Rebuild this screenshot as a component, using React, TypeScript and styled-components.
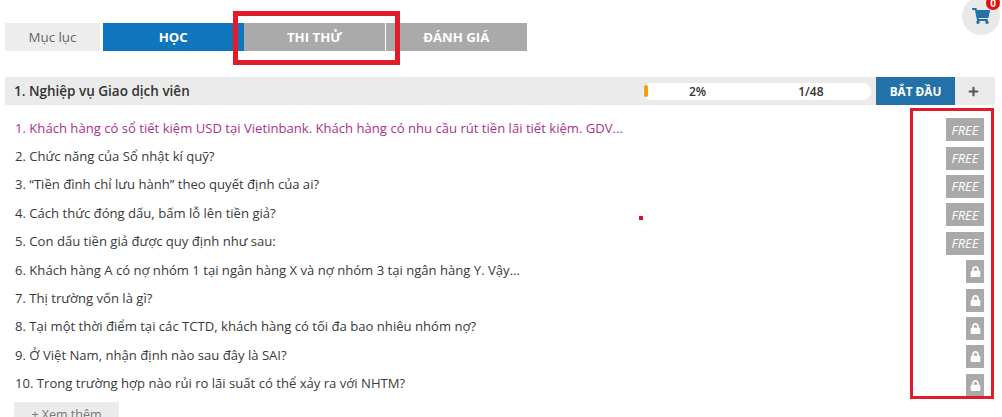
import React from "react";
import styled, { createGlobalStyle } from "styled-components";
import { FaShoppingCart, FaPlus, FaLock } from "react-icons/fa";

const Global = createGlobalStyle`
  html, body { margin: 0; padding: 0; background: #fff; overflow: hidden; }
  body { font-family: "Open Sans", "Noto Sans", sans-serif; }
`;

const Page = styled.div`
  position: relative;
  width: 1002px;
  height: 417px;
  overflow: hidden;
  padding: 23px 7px 0 5px;
  box-sizing: border-box;
`;

const Tabs = styled.div`
  display: flex;
  height: 28px;
`;

const MenuTab = styled.div`
  width: 95px;
  margin-right: 3px;
  background: #ededed;
  color: #666;
  font-size: 13.3px;
  display: flex;
  align-items: center;
  justify-content: center;
`;

const Tab = styled.div<{ $active?: boolean }>`
  width: 141.3px;
  background: ${(p) => (p.$active ? "#0f75bc" : "#aaaaaa")};
  color: #fff;
  font-size: 13.2px;
  font-weight: 700;
  display: flex;
  align-items: center;
  justify-content: center;
  border-right: 1px solid ${(p) => (p.$active ? "#0f75bc" : "#fff")};
  box-sizing: border-box;
  &:last-child { border-right: 0; }
`;

const Section = styled.div`
  margin-top: 26px;
  height: 28px;
  background: #ebebeb;
  display: flex;
  align-items: center;
`;

const SectionTitle = styled.div`
  flex: 1;
  padding-left: 9px;
  font-size: 13.5px;
  font-weight: 600;
  color: #333;
`;

const Progress = styled.div`
  width: 228px;
  height: 17px;
  margin-right: 5px;
  background: #fff;
  border-radius: 9px;
  display: flex;
  align-items: center;
  font-size: 12px;
  font-weight: 600;
  color: #333;
`;

const ProgressFill = styled.div`
  width: 4px;
  height: 12px;
  margin-left: 1px;
  border-radius: 2px;
  background: #f59c0c;
`;

const Percent = styled.span`
  margin-left: 41px;
`;

const Count = styled.span`
  margin-left: 92px;
`;

const StartButton = styled.div`
  width: 79px;
  height: 100%;
  background: #2271a8;
  color: #fff;
  font-size: 11.8px;
  font-weight: 700;
  display: flex;
  align-items: center;
  justify-content: center;
`;

const Expand = styled.div`
  width: 36px;
  margin-right: 4px;
  display: flex;
  justify-content: center;
  color: #555;
  font-size: 11px;
`;

const List = styled.div`
  margin-top: 8.5px;
`;

const Row = styled.div<{ $current?: boolean }>`
  height: 28.4px;
  display: flex;
  align-items: center;
  justify-content: space-between;
  padding: 0 11px 0 10px;
  font-size: 13.1px;
  color: ${(p) => (p.$current ? "#ad2f8e" : "#3a3a3a")};
`;

const Free = styled.div`
  width: 38px;
  height: 23px;
  margin-top: 4px;
  background: #a9a9a9;
  color: #fff;
  font-size: 13px;
  font-style: italic;
  display: flex;
  align-items: center;
  justify-content: center;
`;

const Lock = styled.div`
  width: 18px;
  height: 23px;
  margin-top: 4px;
  background: #a9a9a9;
  color: #fff;
  font-size: 11px;
  display: flex;
  align-items: center;
  justify-content: center;
`;

const More = styled.div`
  margin: 5px 0 0 9px;
  width: 105px;
  height: 28px;
  background: #ebebeb;
  color: #777;
  font-size: 12.5px;
  display: flex;
  justify-content: center;
  padding-top: 4px;
  box-sizing: border-box;
`;

const Cart = styled.div`
  position: absolute;
  left: 962px;
  top: -3px;
  width: 38px;
  height: 38px;
  border-radius: 50%;
  background: #e9e9e9;
  color: #2471a8;
  font-size: 18px;
  display: flex;
  align-items: center;
  justify-content: center;
`;

const Badge = styled.div`
  position: absolute;
  left: 986px;
  top: -4px;
  width: 14px;
  height: 14px;
  border-radius: 50%;
  background: #ee0a0a;
  color: #fff;
  font-size: 10px;
  font-weight: 700;
  text-align: center;
  line-height: 14px;
`;

const Mark = styled.div<{ $l: number; $t: number; $w: number; $h: number; $b: number }>`
  position: absolute;
  left: ${(p) => p.$l}px;
  top: ${(p) => p.$t}px;
  width: ${(p) => p.$w}px;
  height: ${(p) => p.$h}px;
  border: ${(p) => p.$b}px solid #e21b2b;
  box-sizing: border-box;
`;

const Dot = styled.div`
  position: absolute;
  left: 639px;
  top: 216px;
  width: 4px;
  height: 4px;
  background: #d8102a;
`;

const items = [
  "1. Khách hàng có sổ tiết kiệm USD tại Vietinbank. Khách hàng có nhu cầu rút tiền lãi tiết kiệm. GDV...",
  "2. Chức năng của Sổ nhật kí quỹ?",
  "3. “Tiền đình chỉ lưu hành” theo quyết định của ai?",
  "4. Cách thức đóng dấu, bấm lỗ lên tiền giả?",
  "5. Con dấu tiền giả được quy định như sau:",
  "6. Khách hàng A có nợ nhóm 1 tại ngân hàng X và nợ nhóm 3 tại ngân hàng Y. Vậy...",
  "7. Thị trường vốn là gì?",
  "8. Tại một thời điểm tại các TCTD, khách hàng có tối đa bao nhiêu nhóm nợ?",
  "9. Ở Việt Nam, nhận định nào sau đây là SAI?",
  "10. Trong trường hợp nào rủi ro lãi suất có thể xảy ra với NHTM?",
];

export default function App() {
  return (
    <Page>
      <Global />
      <Tabs>
        <MenuTab>Mục lục</MenuTab>
        <Tab $active>HỌC</Tab>
        <Tab>THI THỬ</Tab>
        <Tab>ĐÁNH GIÁ</Tab>
      </Tabs>
      <Section>
        <SectionTitle>1. Nghiệp vụ Giao dịch viên</SectionTitle>
        <Progress>
          <ProgressFill />
          <Percent>2%</Percent>
          <Count>1/48</Count>
        </Progress>
        <StartButton>BẮT ĐẦU</StartButton>
        <Expand>
          <FaPlus />
        </Expand>
      </Section>
      <List>
        {items.map((t, i) => (
          <Row key={t} $current={i === 0}>
            <span>{t}</span>
            {i < 5 ? (
              <Free>FREE</Free>
            ) : (
              <Lock>
                <FaLock />
              </Lock>
            )}
          </Row>
        ))}
      </List>
      <More>+ Xem thêm</More>
      <Cart>
        <FaShoppingCart />
      </Cart>
      <Badge>0</Badge>
      <Mark $l={233} $t={11} $w={167} $h={54} $b={5} />
      <Mark $l={910} $t={108} $w={84} $h={291} $b={3} />
      <Dot />
    </Page>
  );
}
